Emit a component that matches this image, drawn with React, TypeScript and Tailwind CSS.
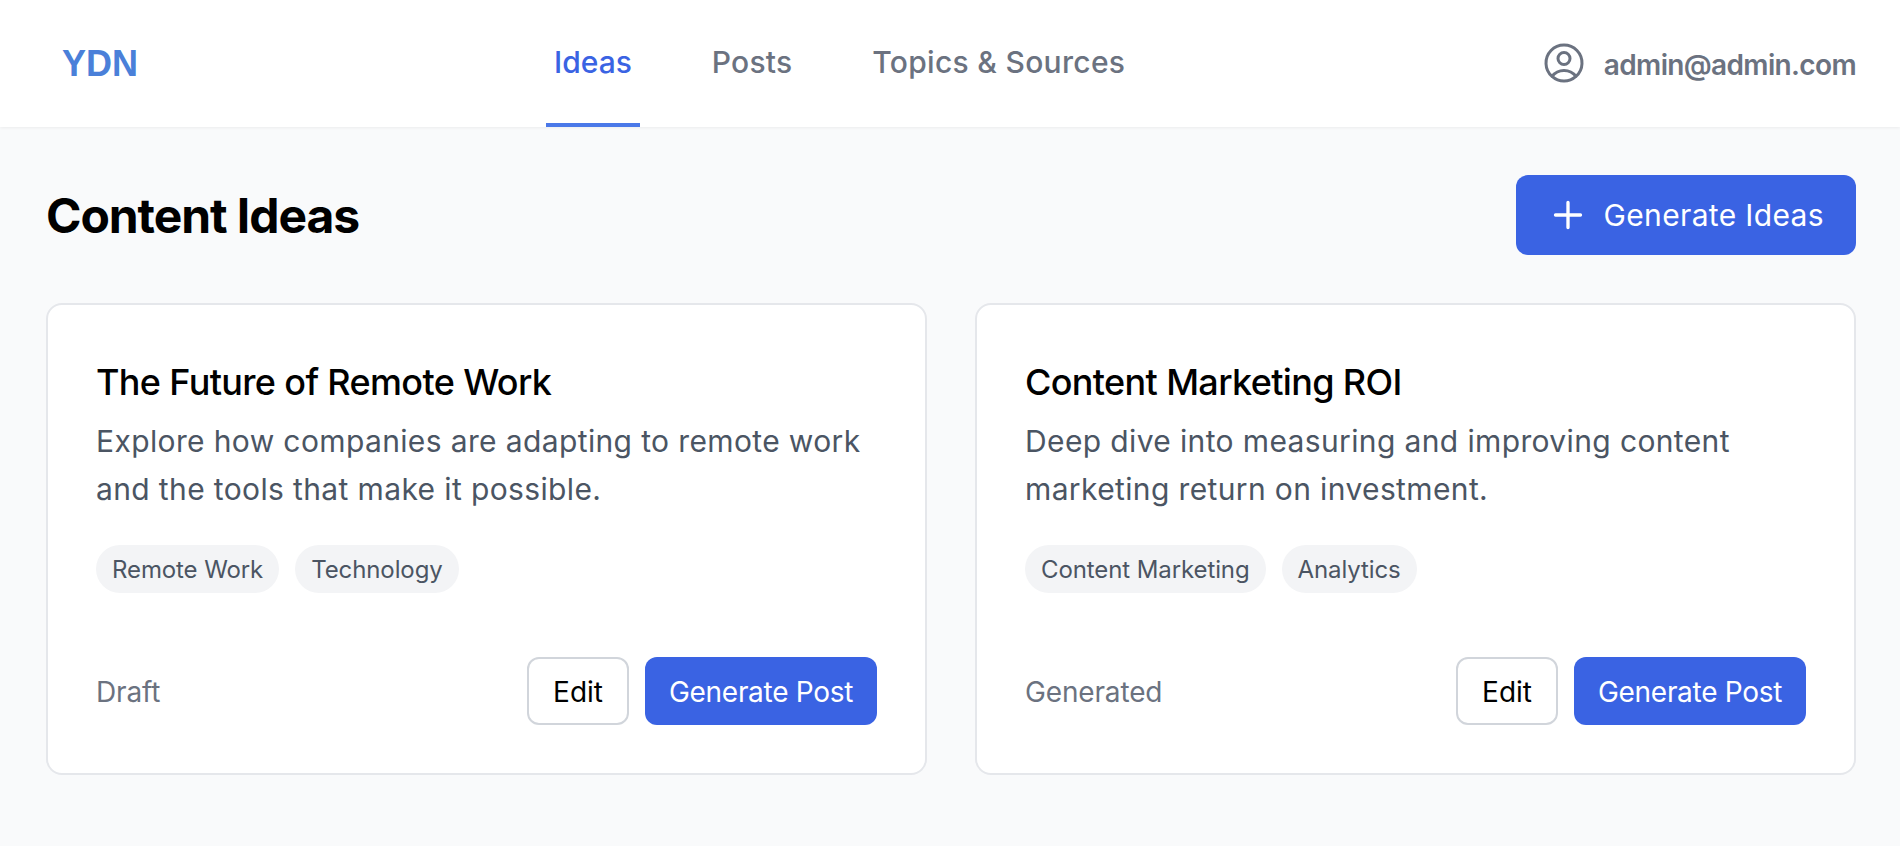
const ideas = [
  {
    title: "The Future of Remote Work",
    description: "Explore how companies are adapting to remote work and the tools that make it possible.",
    tags: ["Remote Work", "Technology"],
    status: "Draft",
  },
  {
    title: "Content Marketing ROI",
    description: "Deep dive into measuring and improving content marketing return on investment.",
    tags: ["Content Marketing", "Analytics"],
    status: "Generated",
  },
];

export default function App() {
  return (
    <div className="min-h-[846px] bg-[#f9fafb] font-['Inter',sans-serif]">
      <header className="relative flex h-[127px] items-center justify-between bg-white pl-[62px] pr-[44px] shadow-[0_1px_3px_rgba(0,0,0,0.06)]">
        <span className="font-['Liberation_Sans',sans-serif] text-[36px] font-bold text-[#4a80d9]">YDN</span>
        <nav className="absolute left-[546px] top-0 flex h-[127px] gap-[64px] pt-[2px]">
          <a className="flex items-center border-b-4 border-[#4a78e8] px-2 text-[30px] font-medium text-[#3a63e3]">Ideas</a>
          <a className="flex items-center border-b-4 border-transparent px-2 text-[30px] font-medium tracking-[0.2px] text-[#6b7280]">Posts</a>
          <a className="flex items-center border-b-4 border-transparent px-2 text-[30px] font-medium tracking-[0.3px] text-[#6b7280]">Topics &amp; Sources</a>
        </nav>
        <div className="flex items-center gap-[16px]">
          <svg className="mb-[2px] h-12 w-12 text-[#6b7280]" fill="none" viewBox="0 0 24 24" stroke="currentColor" strokeWidth={1.5}>
            <path strokeLinecap="round" strokeLinejoin="round" d="M17.982 18.725A7.488 7.488 0 0012 15.75a7.488 7.488 0 00-5.982 2.975m11.964 0a9 9 0 10-11.963 0m11.963 0A8.966 8.966 0 0112 21a8.966 8.966 0 01-5.982-2.275M15 9.75a3 3 0 11-6 0 3 3 0 016 0z" />
          </svg>
          <span className="pt-[2px] text-[28px] font-semibold tracking-[-0.65px] text-[#6b7280]">admin@admin.com</span>
        </div>
      </header>

      <main className="pl-[46px] pr-[44px] pt-[48px]">
        <div className="flex items-center justify-between">
          <h1 className="pt-[2px] text-[48px] font-bold tracking-[-1.07px] text-black">Content Ideas</h1>
          <button className="flex h-[80px] items-center gap-[16px] rounded-xl bg-[#3a63e3] px-[32px] text-[30px] tracking-[0.35px] text-white">
            <svg className="h-10 w-10" fill="none" viewBox="0 0 24 24" stroke="currentColor" strokeWidth={2}>
              <path strokeLinecap="round" strokeLinejoin="round" d="M12 4.5v15m7.5-7.5h-15" />
            </svg>
            <span className="pt-[1px]">Generate Ideas</span>
          </button>
        </div>

        <div className="mt-[48px] grid grid-cols-2 gap-[48px]">
          {ideas.map((idea) => (
            <div key={idea.title} className="h-[472px] rounded-2xl border-2 border-[#e5e7eb] bg-white p-[48px]">
              <h2 className="pt-[1px] text-[36px] font-medium leading-[56px] tracking-[-0.65px] text-black">{idea.title}</h2>
              <p className="mt-[7px] text-[30px] leading-[48px] tracking-[0.37px] text-[#4b5563]">{idea.description}</p>
              <div className="mt-[32px] flex gap-[16px]">
                {idea.tags.map((tag) => (
                  <span key={tag} className="flex h-[48px] items-center rounded-full bg-[#f3f4f6] px-[16px] pt-[1px] text-[24px] tracking-[-0.1px] text-[#4b5563]">
                    {tag}
                  </span>
                ))}
              </div>
              <div className="mt-[64px] flex items-center justify-between">
                <span className="pt-[2px] text-[28px] tracking-[-0.15px] text-[#6b7280]">{idea.status}</span>
                <div className="flex gap-[16px]">
                  <button className="h-[68px] rounded-xl border-2 border-[#d1d5db] bg-white px-[24px] pt-[2px] text-[28px] text-black">Edit</button>
                  <button className="h-[68px] rounded-xl bg-[#3a63e3] px-[24px] pt-[2px] text-[28px] tracking-[-0.3px] text-white">Generate Post</button>
                </div>
              </div>
            </div>
          ))}
        </div>
      </main>
    </div>
  );
}
